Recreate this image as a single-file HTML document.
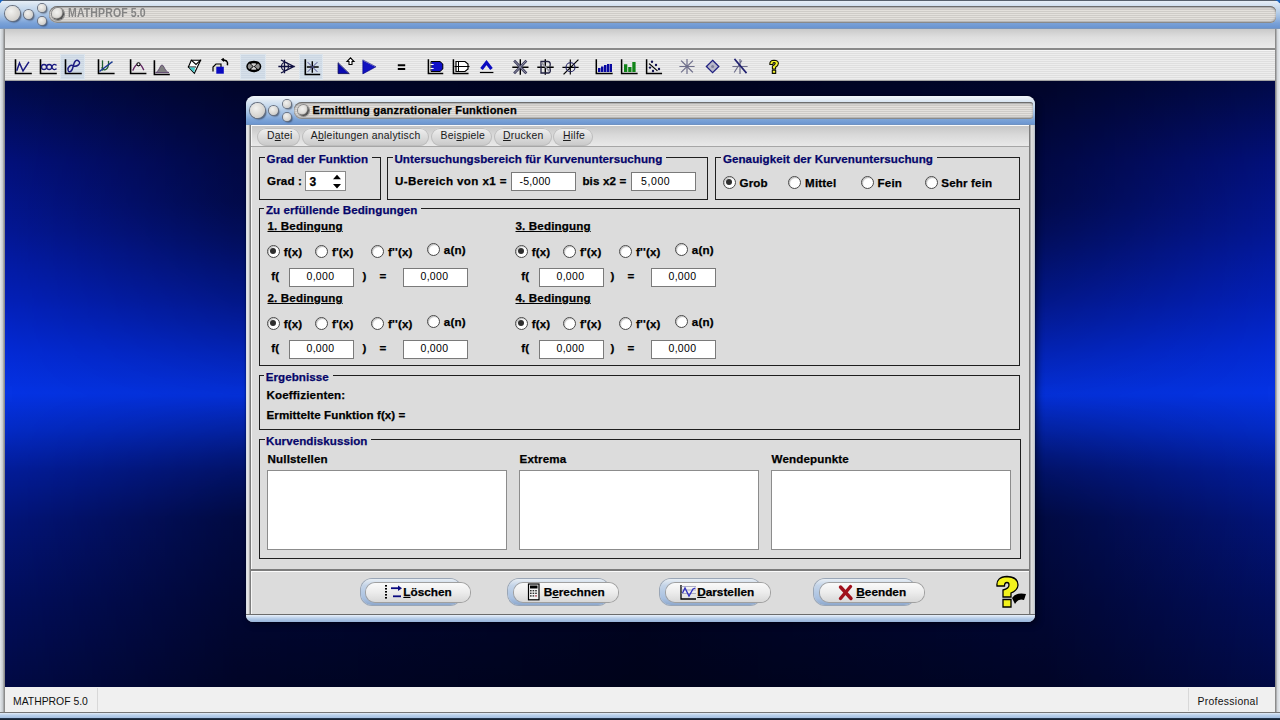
<!DOCTYPE html><html><head><meta charset="utf-8"><style>
*{margin:0;padding:0;box-sizing:border-box}
html,body{width:1280px;height:720px;overflow:hidden;background:#1a2438;font-family:"Liberation Sans",sans-serif}
.a{position:absolute}
.t{position:absolute;white-space:nowrap;line-height:1;font-family:"Liberation Sans",sans-serif}
.bub{position:absolute;border-radius:50%;background:radial-gradient(circle at 40% 35%,#f2f2f0 0,#dcdad6 50%,#c4c2be 100%);box-shadow:0 0 0 1px #6a7280,1.5px 1.5px 1.5px rgba(30,40,60,.6)}
.grp{position:absolute;border:1px solid #1e1e1e}
.inp{position:absolute;background:#fff;border:1px solid #7a7a7a}
.rad{position:absolute;width:13px;height:13px;border-radius:50%;background:#fff;border:1.3px solid #484848;box-shadow:inset 1px 1px 1px #c0c0c0}
.rad.on::after{content:"";position:absolute;left:2.3px;top:2.3px;width:6.2px;height:6.2px;border-radius:50%;background:#2e2e2e}
.pill{position:absolute;border-radius:9px;background:linear-gradient(#f0f0f0,#d8d8d8 60%,#c8c8c8);box-shadow:inset 0 0 0 1px #bdbdbd}
</style></head><body>
<div class="a" style="left:0px;top:0px;width:1280px;height:720px;background:linear-gradient(135deg,#1a64c0 0,#1a64c0 4px,rgba(0,0,0,0) 4px),linear-gradient(225deg,#1a64c0 0,#1a64c0 5px,#cfd8e2 5px)"></div>
<div class="a" style="left:0px;top:3px;width:1280px;height:717px;background:#cfd8e2"></div>
<div class="a" style="left:0px;top:0px;width:1280px;height:29px;border-radius:5px 6px 0 0;background:linear-gradient(#56606c 0,#56606c 1px,#e6eef6 1px,#d4e2f0 5px,#b8cfe8 12px,#94b5e0 19px,#7aa2d8 23px,#6a94d0 28px,#8a9aac 29px)"></div>
<div class="a" style="left:49px;top:5.5px;width:1227px;height:17.0px;border-radius:9px 6px 6px 9px;background:repeating-linear-gradient(#e4e1dd 0,#e4e1dd 1px,#cfccc8 1px,#cfccc8 2px);box-shadow:inset 0 1px 0 #6e6e6e,inset 0 2px 2px #a8a8a8,inset 0 -1px 0 #8a8a8a,inset 0 -2px 2px #b0b0b0"></div>
<div class="bub" style="left:5px;top:6px;width:15px;height:15px"></div>
<div class="bub" style="left:24px;top:9.5px;width:9px;height:9px"></div>
<div class="bub" style="left:38px;top:3.5px;width:8px;height:8px"></div>
<div class="bub" style="left:38px;top:16.5px;width:8px;height:8px"></div>
<div class="bub" style="left:52px;top:8px;width:11.5px;height:11.5px;box-shadow:0 0 0 1px #8a8a8a,inset -1.5px -1.5px 1px #505050"></div>
<div class="t" style="left:67.7px;top:7.44px;font-size:12px;font-weight:bold;color:#848484;-webkit-text-stroke:0.25px #848484;letter-spacing:0.15px;transform:scaleX(0.875);transform-origin:0 0;-webkit-text-stroke:0">MATHPROF 5.0</div>
<div class="a" style="left:0px;top:29px;width:1280px;height:20px;background:linear-gradient(#c9c9c9,#dedede 40%,#ececec)"></div>
<div class="a" style="left:0px;top:48px;width:1280px;height:2px;background:#8a8a8a"></div>
<div class="a" style="left:0px;top:50px;width:1280px;height:31px;background:repeating-linear-gradient(#ededed 0,#ededed 1px,#dfdfdf 1px,#dfdfdf 2px);box-shadow:inset 0 -1px 0 #a4a4a4,inset 0 1px 0 #f6f6f6"></div>
<div class="a" style="left:0px;top:29px;width:5px;height:683px;background:linear-gradient(90deg,#e4e8ec,#c4c8cc 3px,#8c8c8c 4px,#8c8c8c 5px)"></div>
<div class="a" style="left:1275px;top:29px;width:5px;height:683px;background:linear-gradient(90deg,#8c8c8c 0,#8c8c8c 1px,#d0d4d8 2px,#e8ecf0)"></div>
<div class="a" style="left:5px;top:81px;width:1270px;height:606px;background:linear-gradient(#020a48 0,#03107a 80px,#041794 150px,#0420b8 220px,#042ad4 270px,#0533e4 312px,#042ac4 350px,#031c98 390px,#031478 440px,#020e5c 520px,#020a44 606px)"></div>
<div class="a" style="left:5px;top:81px;width:1270px;height:606px;background:linear-gradient(90deg,rgba(0,0,8,0) 0,rgba(0,0,8,.48) 18%,rgba(0,0,8,.7) 50%,rgba(0,0,8,.48) 82%,rgba(0,0,8,0) 100%);-webkit-mask-image:linear-gradient(#000 0,#000 20%,rgba(0,0,0,.12) 52%,rgba(0,0,0,.6) 62%,#000 72%,#000 100%)"></div>
<div class="a" style="left:5px;top:687px;width:1270px;height:25px;background:#f0f0f0"></div>
<div class="a" style="left:97px;top:688px;width:1px;height:23px;background:#d8d8d8"></div>
<div class="a" style="left:1188px;top:688px;width:1px;height:23px;background:#d8d8d8"></div>
<div class="t" style="left:13px;top:696.90px;font-size:10.4px;color:#111;">MATHPROF 5.0</div>
<div class="t" style="left:1197.5px;top:696.70px;font-size:10.4px;color:#111;letter-spacing:0.3px">Professional</div>
<div class="a" style="left:0px;top:712px;width:1280px;height:8px;background:linear-gradient(#767676 0,#767676 1px,#e2ecf8 1px,#bcd2ec 3px,#a8c2e2 5.5px,#22344a 6.5px,#101a26 8px)"></div>
<div class="a" style="left:60px;top:54px;width:25px;height:26px;background:repeating-linear-gradient(#d6e0ea 0,#d6e0ea 1px,#cbd6e2 1px,#cbd6e2 2px);box-shadow:inset 0 0 0 1px #dde6ee"></div>
<div class="a" style="left:240px;top:54px;width:26px;height:26px;background:repeating-linear-gradient(#d6e0ea 0,#d6e0ea 1px,#cbd6e2 1px,#cbd6e2 2px);box-shadow:inset 0 0 0 1px #dde6ee"></div>
<div class="a" style="left:299px;top:54px;width:24px;height:26px;background:repeating-linear-gradient(#d6e0ea 0,#d6e0ea 1px,#cbd6e2 1px,#cbd6e2 2px);box-shadow:inset 0 0 0 1px #dde6ee"></div>
<svg class="a" style="left:0;top:0" width="800" height="82" viewBox="0 0 800 82">
<g fill="none" stroke-linecap="square">
<!-- 1 -->
<path d="M15.5 60V73.5H31" stroke="#000" stroke-width="1.6"/>
<path d="M17 70L19.5 63L23 71L28.5 62.5" stroke="#1a1a80" stroke-width="1.5"/>
<!-- 2 -->
<path d="M40.5 60V73.5H56" stroke="#000" stroke-width="1.6"/>
<circle cx="44" cy="67" r="2.5" stroke="#1a1a80" stroke-width="1.3"/>
<circle cx="49.2" cy="67" r="2.5" stroke="#1a1a80" stroke-width="1.3"/>
<path d="M56 65A2.5 2.5 0 1 0 56 69" stroke="#1a1a80" stroke-width="1.3"/>
<!-- 3 -->
<path d="M65.5 60V73.5H81" stroke="#000" stroke-width="1.6"/>
<path d="M73.3 66C71 64 67.5 67 68 70S72 72.5 73.3 66S77 59.5 79 61.5S77.5 67 73.3 66" stroke="#1a1a80" stroke-width="1.4"/>
<!-- 4 -->
<path d="M98.5 60V73.5H113.8" stroke="#000" stroke-width="1.6"/>
<path d="M102.5 61V70" stroke="#206030" stroke-width="1.3"/>
<path d="M102 68Q104 71 106.5 69T108.5 61.5" stroke="#206030" stroke-width="1.3"/>
<path d="M100 71L112 62" stroke="#1a3a90" stroke-width="1.3"/>
<!-- 5 -->
<path d="M130.6 60V73.5H145.6" stroke="#000" stroke-width="1.6"/>
<path d="M133 70Q138.5 58 143.5 69.5" stroke="#602060" stroke-width="1.4"/>
<circle cx="138.5" cy="64.3" r="1.6" fill="#fff" stroke="#000" stroke-width="1.1"/>
<!-- 6 -->
<path d="M154.4 61V74.5H169" stroke="#000" stroke-width="1.6"/>
<path d="M156 72.5C159 72 160 65 162 65S165 72 168.5 72.5Z" fill="#808080" stroke="#604a70" stroke-width="1"/>
<!-- 7 -->
<path d="M191.3 60.2H200.6L194.4 73.3L188.4 67Z" fill="#fff" stroke="#000" stroke-width="1.1"/>
<path d="M191.3 60.2L196 64.5L200.6 60.2M188.4 67H195.5" stroke="#000" stroke-width="1.1"/>
<path d="M189 67.5H195L194.3 72.5Z" fill="#40c8c8"/>
<!-- 8 -->
<path d="M213 71V67L216 64H221V67" fill="#e0e0d0" stroke="#000" stroke-width="1.2"/>
<rect x="216.3" y="66.7" width="7.5" height="7" fill="#0a0ac0"/>
<path d="M222.5 59.5L226.5 61Q228 62.5 227.5 64.5" stroke="#000" stroke-width="1.5"/>
<path d="M221 59.5L224 58V62Z" fill="#000"/>
<!-- 9 -->
<ellipse cx="253.8" cy="66.4" rx="6.8" ry="5" fill="#909090" stroke="#000" stroke-width="1.5"/>
<path d="M249.5 62.5L258 70.3M258 62.5L249.5 70.3" stroke="#000" stroke-width="1.4"/>
<path d="M250.5 62.3H257M250.5 70.5H257" stroke="#000" stroke-width="1.2"/>
<path d="M251 64L253.8 66.4L256.5 64Z M251 69L253.8 66.4L256.5 69Z" fill="#d0d0d0"/>
<!-- 10 -->
<path d="M279 66.5H294M284.5 60.5V72.5M281.5 60.3L294 66.5L281.5 72.7" stroke="#101040" stroke-width="1.3"/>
<ellipse cx="285" cy="66.5" rx="3.5" ry="4" stroke="#101040" stroke-width="1.2"/>
<!-- 11 -->
<path d="M305.3 60V74.5H319.4" stroke="#000" stroke-width="1.6"/>
<path d="M307.5 67H318M312.3 62V72" stroke="#000" stroke-width="1.4"/>
<path d="M308 62.5L317 71.5M317 62.5L308 71.5" stroke="#505090" stroke-width="1"/>
<!-- 12 -->
<path d="M338.1 63.2V73.6H348.8Z" fill="#0a0ab0" stroke="#000050" stroke-width=".8"/>
<path d="M349 64.5V61.5H347L350.5 57.8L354 61.5H352V64.5Z" fill="#fff" stroke="#000" stroke-width="1.1"/>
<!-- 13 -->
<path d="M362.8 60.4V73.9L375.6 67Z" fill="#1212c0" stroke="#000080" stroke-width=".6"/>
<!-- 14 -->
<path d="M397.8 64.2H405.2V66.2H397.8Z M397.8 68H405.2V70H397.8Z" fill="#000"/>
<!-- 15 -->
<path d="M428.4 60V73.5H442.5" stroke="#000" stroke-width="1.5"/>
<path d="M431.5 61.5H440L442.8 64V69L440 71.5H431.5Z" fill="#1010c8" stroke="#000" stroke-width="1"/>
<path d="M431 64.5H433M431 68.5H433" stroke="#fff" stroke-width="1.2"/>
<!-- 16 -->
<path d="M453.4 60V73.5H467.8" stroke="#000" stroke-width="1.5"/>
<path d="M456 61.5H465L468 64V69L465 71.5H456Z" fill="#fff" stroke="#000" stroke-width="1.2"/>
<path d="M455 66.5H469M458.5 61.5V71.5" stroke="#000" stroke-width="1"/>
<!-- 17 -->
<path d="M481.5 69L486.5 62.5L491.5 69" stroke="#0a0ac0" stroke-width="3.2" stroke-linecap="butt"/>
<path d="M480.5 72.5H492.8" stroke="#000" stroke-width="1.2"/>
<!-- 18 -->
<path d="M513 67.3H527.8M520.3 60V74" stroke="#000" stroke-width="1.4"/>
<path d="M515 61.5L525.5 72.5M525.5 61.5L515 72.5" stroke="#404060" stroke-width="2.6"/>
<path d="M515 61.5L525.5 72.5M525.5 61.5L515 72.5" stroke="#9090a0" stroke-width="1"/>
<!-- 19 -->
<path d="M538 67.3H553M545.3 60V74" stroke="#000" stroke-width="1.4"/>
<path d="M541 61.5H548Q551 62 550 66M541 73H549Q551 72 550 68.5M541 61.5V73" stroke="#202040" stroke-width="1.3"/>
<path d="M542 63L549 71" stroke="#9090a0" stroke-width="1.5"/>
<!-- 20 -->
<path d="M563 67.3H578M570.3 60V74M564 74L578 60" stroke="#000" stroke-width="1.2"/>
<circle cx="570.5" cy="67.3" r="4.5" stroke="#202060" stroke-width="1.1"/>
<!-- 21 -->
<path d="M596.3 60V73.5H611.9" stroke="#000" stroke-width="1.5"/>
<path d="M598 68H600.5V72H598Z M601 66.5H603.5V72H601Z M604 65H606.5V72H604Z M607 64H609.5V72H607Z M610 64H612V72H610Z" fill="#0808a0"/>
<!-- 22 -->
<path d="M621.6 60V73.5H636.9" stroke="#000" stroke-width="1.5"/>
<path d="M624 64.2H627.3V72H624Z M628.2 67H631.5V72H628.2Z M632.3 62H635.6V72H632.3Z" fill="#108418"/>
<!-- 23 -->
<path d="M646.6 60V73.5H661.3" stroke="#000" stroke-width="1.5"/>
<path d="M649.5 64L657 70.5" stroke="#000" stroke-width="1.2"/>
<g fill="#101050"><circle cx="652" cy="61.7" r="1.2"/><circle cx="650" cy="67.6" r="1.2"/><circle cx="656" cy="65" r="1.2"/><circle cx="653" cy="71" r="1.2"/><circle cx="659" cy="69" r="1.2"/></g>
<!-- 24 -->
<path d="M680 66.5H694M687 59.5V73.5M681.5 61L692.5 72M692.5 61L681.5 72" stroke="#70708c" stroke-width="1.2"/>
<!-- 25 -->
<path d="M712.6 60.3L718.8 66.5L712.6 72.7L706.4 66.5Z" fill="#b8b8c8" stroke="#202080" stroke-width="1.3"/>
<circle cx="712.6" cy="66.5" r="1.5" fill="#8080a0"/>
<!-- 26 -->
<path d="M733 66.5H747M740 59.5V73.5M741.5 61L734.5 72" stroke="#70708c" stroke-width="1.2"/>
<path d="M735 59.5L746 72.5" stroke="#202070" stroke-width="1.6"/>
</g>
<path d="M769.8 64.5Q769.5 60.2 774 60.2Q778.5 60.3 778.4 63.6Q778.3 65.8 775.6 67.2V69H772.4V66Q775.2 64.8 775.2 63.5Q775.2 62.6 774 62.6Q772.9 62.6 772.9 64.5Z M772.3 70.3H775.7V73.4H772.3Z" fill="#f2f22a" stroke="#101000" stroke-width="1.1" stroke-linejoin="round"/>
</svg>
<div class="a" style="left:246px;top:96px;width:789px;height:526px;border-radius:9px 9px 7px 7px;background:#d4dae2;box-shadow:0 0 2px rgba(0,0,0,.6),3px 3px 6px rgba(0,0,10,.45)"></div>
<div class="a" style="left:246px;top:96px;width:789px;height:30px;border-radius:8px 8px 0 0;background:linear-gradient(#f2f6fa 0,#dce7f2 5px,#bcd2ea 12px,#98b8e0 19px,#7ea5d8 23px,#6c96d0 28px,#7a8a9c 30px)"></div>
<div class="a" style="left:294px;top:102px;width:739px;height:16.5px;border-radius:8px 3px 3px 8px;background:repeating-linear-gradient(#e4e1dd 0,#e4e1dd 1px,#cfccc8 1px,#cfccc8 2px);box-shadow:inset 0 1px 0 #6e6e6e,inset 0 2px 2px #a8a8a8,inset 0 -1px 0 #8a8a8a,inset 0 -2px 2px #b0b0b0"></div>
<div class="bub" style="left:250px;top:102.5px;width:15px;height:15px"></div>
<div class="bub" style="left:269px;top:105.5px;width:9px;height:9px"></div>
<div class="bub" style="left:283px;top:100px;width:8px;height:8px"></div>
<div class="bub" style="left:283px;top:113px;width:8px;height:8px"></div>
<div class="bub" style="left:297.5px;top:104.5px;width:11px;height:11px;box-shadow:0 0 0 1px #8a8a8a,inset -1.5px -1.5px 1px #505050"></div>
<div class="t" style="left:312.5px;top:105.00px;font-size:11.1px;font-weight:bold;color:#000;-webkit-text-stroke:0.25px #000;letter-spacing:0.2px;">Ermittlung ganzrationaler Funktionen</div>
<div class="a" style="left:246px;top:125px;width:5px;height:489px;background:linear-gradient(90deg,#c8d4e2,#e8e8e8 1px,#d8d8d8 3px,#7c7c7c 4px,#7c7c7c 5px)"></div>
<div class="a" style="left:1029px;top:125px;width:6px;height:489px;background:linear-gradient(90deg,#7c7c7c 0,#7c7c7c 1px,#e0e0e0 2px,#d0d0d0 5px,#a8b8cc 6px)"></div>
<div class="a" style="left:251px;top:125px;width:778px;height:489px;background:#dcdcdc"></div>
<div class="a" style="left:251px;top:126px;width:778px;height:20px;background:linear-gradient(#c6c6c6,#d9d9d9 45%,#e9e9e9)"></div>
<div class="a" style="left:251px;top:125px;width:778px;height:1px;background:#fafafa"></div>
<div class="a" style="left:251px;top:126px;width:1px;height:488px;background:#f6f6f6"></div>
<div class="a" style="left:251px;top:146px;width:778px;height:1px;background:#a6a6a6"></div>
<div class="pill" style="left:256.7px;top:128px;width:43.8px;height:17.5px"></div>
<div class="t" style="left:267px;top:131.00px;font-size:10.4px;color:#1a1a1a;letter-spacing:0.26px">D<u>a</u>tei</div>
<div class="pill" style="left:302px;top:128px;width:126.8px;height:17.5px"></div>
<div class="t" style="left:310.8px;top:131.00px;font-size:10.4px;color:#1a1a1a;letter-spacing:0.26px">A<u>b</u>leitungen analytisch</div>
<div class="pill" style="left:431px;top:128px;width:60.8px;height:17.5px"></div>
<div class="t" style="left:440.6px;top:131.00px;font-size:10.4px;color:#1a1a1a;letter-spacing:0.26px">Bei<u>s</u>piele</div>
<div class="pill" style="left:494px;top:128px;width:57.9px;height:17.5px"></div>
<div class="t" style="left:503px;top:131.00px;font-size:10.4px;color:#1a1a1a;letter-spacing:0.26px"><u>D</u>rucken</div>
<div class="pill" style="left:553.4px;top:128px;width:40.1px;height:17.5px"></div>
<div class="t" style="left:563px;top:131.00px;font-size:10.4px;color:#1a1a1a;letter-spacing:0.26px"><u>H</u>ilfe</div>
<div class="a" style="left:251px;top:569px;width:778px;height:2px;background:#7c7c7c"></div>
<div class="a" style="left:251px;top:571px;width:778px;height:1px;background:#fbfbfb"></div>
<div class="a" style="left:246px;top:614px;width:789px;height:8px;border-radius:0 0 7px 7px;background:linear-gradient(#6c6c6c 0,#6c6c6c 1px,#e8f0fa 1px,#b0c8e6 5px,#98b4da 8px)"></div>
<div class="grp" style="left:259px;top:157px;width:122px;height:43px"></div>
<div class="t" style="left:265.1px;top:152.68px;font-size:11.6px;font-weight:bold;color:#06066a;-webkit-text-stroke:0.25px #06066a;letter-spacing:0.06px;background:#dcdcdc;padding:0 4px 0 1.5px">Grad der Funktion</div>
<div class="grp" style="left:387px;top:157px;width:321px;height:43px"></div>
<div class="t" style="left:392.9px;top:152.68px;font-size:11.6px;font-weight:bold;color:#06066a;-webkit-text-stroke:0.25px #06066a;letter-spacing:0.06px;background:#dcdcdc;padding:0 4px 0 1.5px">Untersuchungsbereich für Kurvenuntersuchung</div>
<div class="grp" style="left:715px;top:157px;width:305px;height:43px"></div>
<div class="t" style="left:721.4px;top:152.68px;font-size:11.6px;font-weight:bold;color:#06066a;-webkit-text-stroke:0.25px #06066a;letter-spacing:0.06px;background:#dcdcdc;padding:0 4px 0 1.5px">Genauigkeit der Kurvenuntersuchung</div>
<div class="grp" style="left:259px;top:208px;width:761px;height:158px"></div>
<div class="t" style="left:264.4px;top:203.68px;font-size:11.6px;font-weight:bold;color:#06066a;-webkit-text-stroke:0.25px #06066a;letter-spacing:0.06px;background:#dcdcdc;padding:0 4px 0 1.5px">Zu erfüllende Bedingungen</div>
<div class="grp" style="left:259px;top:375px;width:761px;height:55px"></div>
<div class="t" style="left:264.2px;top:370.98px;font-size:11.6px;font-weight:bold;color:#06066a;-webkit-text-stroke:0.25px #06066a;letter-spacing:0.06px;background:#dcdcdc;padding:0 4px 0 1.5px">Ergebnisse</div>
<div class="grp" style="left:259px;top:439px;width:762px;height:120px"></div>
<div class="t" style="left:264.5px;top:434.88px;font-size:11.6px;font-weight:bold;color:#06066a;-webkit-text-stroke:0.25px #06066a;letter-spacing:0.06px;background:#dcdcdc;padding:0 4px 0 1.5px">Kurvendiskussion</div>
<div class="t" style="left:267px;top:175.18px;font-size:11.6px;font-weight:bold;color:#000;-webkit-text-stroke:0.25px #000;letter-spacing:0.15px;">Grad :</div>
<div class="inp" style="left:305px;top:171px;width:41px;height:20px;border-color:#8a8a8a"></div>
<div class="t" style="left:309.5px;top:175.64px;font-size:12px;font-weight:bold;color:#000;-webkit-text-stroke:0.25px #000;letter-spacing:0.15px;">3</div>
<svg class="a" style="left:330px;top:172px" width="14" height="18"><path d="M3 7.2 L7 2.8 L11 7.2Z M3 12 L7 16.4 L11 12Z" fill="#000"/></svg>
<div class="t" style="left:395px;top:174.78px;font-size:11.6px;font-weight:bold;color:#000;-webkit-text-stroke:0.25px #000;letter-spacing:0.4px;">U-Bereich von x1 =</div>
<div class="inp" style="left:511px;top:172px;width:65px;height:19px"></div>
<div class="t" style="left:519.5px;top:176.41px;font-size:10.5px;color:#000;letter-spacing:0.2px">-5,000</div>
<div class="t" style="left:582.4px;top:174.78px;font-size:11.6px;font-weight:bold;color:#000;-webkit-text-stroke:0.25px #000;letter-spacing:0.15px;">bis x2 =</div>
<div class="inp" style="left:631px;top:172px;width:65px;height:19px"></div>
<div class="t" style="left:641px;top:176.41px;font-size:10.5px;color:#000;letter-spacing:0.6px">5,000</div>
<div class="rad on" style="left:722.7px;top:176px"></div>
<div class="t" style="left:739.5px;top:177.18px;font-size:11.6px;font-weight:bold;color:#000;-webkit-text-stroke:0.25px #000;letter-spacing:0.15px;">Grob</div>
<div class="rad" style="left:788.3px;top:176px"></div>
<div class="t" style="left:805.0999999999999px;top:177.18px;font-size:11.6px;font-weight:bold;color:#000;-webkit-text-stroke:0.25px #000;letter-spacing:0.15px;">Mittel</div>
<div class="rad" style="left:860.8px;top:176px"></div>
<div class="t" style="left:877.5999999999999px;top:177.18px;font-size:11.6px;font-weight:bold;color:#000;-webkit-text-stroke:0.25px #000;letter-spacing:0.15px;">Fein</div>
<div class="rad" style="left:924.5px;top:176px"></div>
<div class="t" style="left:941.3px;top:177.18px;font-size:11.6px;font-weight:bold;color:#000;-webkit-text-stroke:0.25px #000;letter-spacing:0.15px;">Sehr fein</div>
<div class="t" style="left:267.5px;top:220.18px;font-size:11.6px;font-weight:bold;color:#000;-webkit-text-stroke:0.25px #000;letter-spacing:0.15px;text-decoration:underline;text-underline-offset:1px">1. Bedingung</div>
<div class="rad on" style="left:266.5px;top:244.9px"></div>
<div class="t" style="left:283.7px;top:246.18px;font-size:11.6px;font-weight:bold;color:#000;-webkit-text-stroke:0.25px #000;letter-spacing:0.15px;">f(x)</div>
<div class="rad" style="left:314.8px;top:244.9px"></div>
<div class="t" style="left:331.95px;top:246.18px;font-size:11.6px;font-weight:bold;color:#000;-webkit-text-stroke:0.25px #000;letter-spacing:0.15px;">f'(x)</div>
<div class="rad" style="left:370.9px;top:244.9px"></div>
<div class="t" style="left:388.09999999999997px;top:246.18px;font-size:11.6px;font-weight:bold;color:#000;-webkit-text-stroke:0.25px #000;letter-spacing:0.15px;">f''(x)</div>
<div class="rad" style="left:426.6px;top:243.0px"></div>
<div class="t" style="left:443.8px;top:244.28px;font-size:11.6px;font-weight:bold;color:#000;-webkit-text-stroke:0.25px #000;letter-spacing:0.15px;">a(n)</div>
<div class="t" style="left:271.25px;top:269.58px;font-size:11.6px;font-weight:bold;color:#000;-webkit-text-stroke:0.25px #000;letter-spacing:0.15px;">f(</div>
<div class="inp" style="left:289.4px;top:267.5px;width:65px;height:19px"></div>
<div class="t" style="left:306.5px;top:270.81px;font-size:10.5px;color:#000;letter-spacing:0.3px">0,000</div>
<div class="t" style="left:362.6px;top:269.58px;font-size:11.6px;font-weight:bold;color:#000;-webkit-text-stroke:0.25px #000;letter-spacing:0.15px;">)</div>
<div class="t" style="left:379.4px;top:269.58px;font-size:11.6px;font-weight:bold;color:#000;-webkit-text-stroke:0.25px #000;letter-spacing:0.15px;">=</div>
<div class="inp" style="left:403.2px;top:267.5px;width:65px;height:19px"></div>
<div class="t" style="left:420.5px;top:270.81px;font-size:10.5px;color:#000;letter-spacing:0.3px">0,000</div>
<div class="t" style="left:267.5px;top:292.18px;font-size:11.6px;font-weight:bold;color:#000;-webkit-text-stroke:0.25px #000;letter-spacing:0.15px;text-decoration:underline;text-underline-offset:1px">2. Bedingung</div>
<div class="rad on" style="left:266.5px;top:316.9px"></div>
<div class="t" style="left:283.7px;top:318.18px;font-size:11.6px;font-weight:bold;color:#000;-webkit-text-stroke:0.25px #000;letter-spacing:0.15px;">f(x)</div>
<div class="rad" style="left:314.8px;top:316.9px"></div>
<div class="t" style="left:331.95px;top:318.18px;font-size:11.6px;font-weight:bold;color:#000;-webkit-text-stroke:0.25px #000;letter-spacing:0.15px;">f'(x)</div>
<div class="rad" style="left:370.9px;top:316.9px"></div>
<div class="t" style="left:388.09999999999997px;top:318.18px;font-size:11.6px;font-weight:bold;color:#000;-webkit-text-stroke:0.25px #000;letter-spacing:0.15px;">f''(x)</div>
<div class="rad" style="left:426.6px;top:315.0px"></div>
<div class="t" style="left:443.8px;top:316.28px;font-size:11.6px;font-weight:bold;color:#000;-webkit-text-stroke:0.25px #000;letter-spacing:0.15px;">a(n)</div>
<div class="t" style="left:271.25px;top:341.58px;font-size:11.6px;font-weight:bold;color:#000;-webkit-text-stroke:0.25px #000;letter-spacing:0.15px;">f(</div>
<div class="inp" style="left:289.4px;top:339.5px;width:65px;height:19px"></div>
<div class="t" style="left:306.5px;top:342.81px;font-size:10.5px;color:#000;letter-spacing:0.3px">0,000</div>
<div class="t" style="left:362.6px;top:341.58px;font-size:11.6px;font-weight:bold;color:#000;-webkit-text-stroke:0.25px #000;letter-spacing:0.15px;">)</div>
<div class="t" style="left:379.4px;top:341.58px;font-size:11.6px;font-weight:bold;color:#000;-webkit-text-stroke:0.25px #000;letter-spacing:0.15px;">=</div>
<div class="inp" style="left:403.2px;top:339.5px;width:65px;height:19px"></div>
<div class="t" style="left:420.5px;top:342.81px;font-size:10.5px;color:#000;letter-spacing:0.3px">0,000</div>
<div class="t" style="left:515.5px;top:220.18px;font-size:11.6px;font-weight:bold;color:#000;-webkit-text-stroke:0.25px #000;letter-spacing:0.15px;text-decoration:underline;text-underline-offset:1px">3. Bedingung</div>
<div class="rad on" style="left:514.5px;top:244.9px"></div>
<div class="t" style="left:531.7px;top:246.18px;font-size:11.6px;font-weight:bold;color:#000;-webkit-text-stroke:0.25px #000;letter-spacing:0.15px;">f(x)</div>
<div class="rad" style="left:562.8px;top:244.9px"></div>
<div class="t" style="left:579.95px;top:246.18px;font-size:11.6px;font-weight:bold;color:#000;-webkit-text-stroke:0.25px #000;letter-spacing:0.15px;">f'(x)</div>
<div class="rad" style="left:618.9px;top:244.9px"></div>
<div class="t" style="left:636.0999999999999px;top:246.18px;font-size:11.6px;font-weight:bold;color:#000;-webkit-text-stroke:0.25px #000;letter-spacing:0.15px;">f''(x)</div>
<div class="rad" style="left:674.6px;top:243.0px"></div>
<div class="t" style="left:691.8px;top:244.28px;font-size:11.6px;font-weight:bold;color:#000;-webkit-text-stroke:0.25px #000;letter-spacing:0.15px;">a(n)</div>
<div class="t" style="left:521.25px;top:269.58px;font-size:11.6px;font-weight:bold;color:#000;-webkit-text-stroke:0.25px #000;letter-spacing:0.15px;">f(</div>
<div class="inp" style="left:539.4px;top:267.5px;width:65px;height:19px"></div>
<div class="t" style="left:556.5px;top:270.81px;font-size:10.5px;color:#000;letter-spacing:0.3px">0,000</div>
<div class="t" style="left:610.6px;top:269.58px;font-size:11.6px;font-weight:bold;color:#000;-webkit-text-stroke:0.25px #000;letter-spacing:0.15px;">)</div>
<div class="t" style="left:627.4px;top:269.58px;font-size:11.6px;font-weight:bold;color:#000;-webkit-text-stroke:0.25px #000;letter-spacing:0.15px;">=</div>
<div class="inp" style="left:651.2px;top:267.5px;width:65px;height:19px"></div>
<div class="t" style="left:668.5px;top:270.81px;font-size:10.5px;color:#000;letter-spacing:0.3px">0,000</div>
<div class="t" style="left:515.5px;top:292.18px;font-size:11.6px;font-weight:bold;color:#000;-webkit-text-stroke:0.25px #000;letter-spacing:0.15px;text-decoration:underline;text-underline-offset:1px">4. Bedingung</div>
<div class="rad on" style="left:514.5px;top:316.9px"></div>
<div class="t" style="left:531.7px;top:318.18px;font-size:11.6px;font-weight:bold;color:#000;-webkit-text-stroke:0.25px #000;letter-spacing:0.15px;">f(x)</div>
<div class="rad" style="left:562.8px;top:316.9px"></div>
<div class="t" style="left:579.95px;top:318.18px;font-size:11.6px;font-weight:bold;color:#000;-webkit-text-stroke:0.25px #000;letter-spacing:0.15px;">f'(x)</div>
<div class="rad" style="left:618.9px;top:316.9px"></div>
<div class="t" style="left:636.0999999999999px;top:318.18px;font-size:11.6px;font-weight:bold;color:#000;-webkit-text-stroke:0.25px #000;letter-spacing:0.15px;">f''(x)</div>
<div class="rad" style="left:674.6px;top:315.0px"></div>
<div class="t" style="left:691.8px;top:316.28px;font-size:11.6px;font-weight:bold;color:#000;-webkit-text-stroke:0.25px #000;letter-spacing:0.15px;">a(n)</div>
<div class="t" style="left:521.25px;top:341.58px;font-size:11.6px;font-weight:bold;color:#000;-webkit-text-stroke:0.25px #000;letter-spacing:0.15px;">f(</div>
<div class="inp" style="left:539.4px;top:339.5px;width:65px;height:19px"></div>
<div class="t" style="left:556.5px;top:342.81px;font-size:10.5px;color:#000;letter-spacing:0.3px">0,000</div>
<div class="t" style="left:610.6px;top:341.58px;font-size:11.6px;font-weight:bold;color:#000;-webkit-text-stroke:0.25px #000;letter-spacing:0.15px;">)</div>
<div class="t" style="left:627.4px;top:341.58px;font-size:11.6px;font-weight:bold;color:#000;-webkit-text-stroke:0.25px #000;letter-spacing:0.15px;">=</div>
<div class="inp" style="left:651.2px;top:339.5px;width:65px;height:19px"></div>
<div class="t" style="left:668.5px;top:342.81px;font-size:10.5px;color:#000;letter-spacing:0.3px">0,000</div>
<div class="t" style="left:266.5px;top:388.88px;font-size:11.6px;font-weight:bold;color:#000;-webkit-text-stroke:0.25px #000;letter-spacing:0.15px;">Koeffizienten:</div>
<div class="t" style="left:266.5px;top:408.88px;font-size:11.6px;font-weight:bold;color:#000;-webkit-text-stroke:0.25px #000;letter-spacing:0.08px;">Ermittelte Funktion f(x) =</div>
<div class="t" style="left:267.5px;top:452.68px;font-size:11.6px;font-weight:bold;color:#000;-webkit-text-stroke:0.25px #000;letter-spacing:0.15px;">Nullstellen</div>
<div class="inp" style="left:267px;top:470px;width:240px;height:80px;border-color:#8c8c8c"></div>
<div class="t" style="left:519.5px;top:452.68px;font-size:11.6px;font-weight:bold;color:#000;-webkit-text-stroke:0.25px #000;letter-spacing:0.15px;">Extrema</div>
<div class="inp" style="left:519px;top:470px;width:240px;height:80px;border-color:#8c8c8c"></div>
<div class="t" style="left:771.5px;top:452.68px;font-size:11.6px;font-weight:bold;color:#000;-webkit-text-stroke:0.25px #000;letter-spacing:0.15px;">Wendepunkte</div>
<div class="inp" style="left:771px;top:470px;width:240px;height:80px;border-color:#8c8c8c"></div>
<div class="a" style="left:360.5px;top:579px;width:100.5px;height:26px;border-radius:11px;background:linear-gradient(#e8eef4,#c4d4e8 25%,#a8c0e0 75%,#8ea8cc);box-shadow:0 0 0 1px #9aa6b6"></div>
<div class="a" style="left:366px;top:582.5px;width:104px;height:19.0px;border-radius:9px;background:linear-gradient(#fafafa,#ececec 50%,#d8d8d8);box-shadow:0 0 0 1px #a0a0a0"></div>
<div class="t" style="left:403.3px;top:586.91px;font-size:11.8px;font-weight:bold;color:#000;-webkit-text-stroke:0.25px #000;letter-spacing:0px;"><u>L</u>öschen</div>
<div class="a" style="left:508.0px;top:579px;width:100.5px;height:26px;border-radius:11px;background:linear-gradient(#e8eef4,#c4d4e8 25%,#a8c0e0 75%,#8ea8cc);box-shadow:0 0 0 1px #9aa6b6"></div>
<div class="a" style="left:513.5px;top:582.5px;width:104.0px;height:19.0px;border-radius:9px;background:linear-gradient(#fafafa,#ececec 50%,#d8d8d8);box-shadow:0 0 0 1px #a0a0a0"></div>
<div class="t" style="left:543.7px;top:586.91px;font-size:11.8px;font-weight:bold;color:#000;-webkit-text-stroke:0.25px #000;letter-spacing:0px;">B<u>e</u>rechnen</div>
<div class="a" style="left:660.0px;top:579px;width:100.5px;height:26px;border-radius:11px;background:linear-gradient(#e8eef4,#c4d4e8 25%,#a8c0e0 75%,#8ea8cc);box-shadow:0 0 0 1px #9aa6b6"></div>
<div class="a" style="left:665.5px;top:582.5px;width:104.0px;height:19.0px;border-radius:9px;background:linear-gradient(#fafafa,#ececec 50%,#d8d8d8);box-shadow:0 0 0 1px #a0a0a0"></div>
<div class="t" style="left:697.2px;top:586.91px;font-size:11.8px;font-weight:bold;color:#000;-webkit-text-stroke:0.25px #000;letter-spacing:0px;"><u>D</u>arstellen</div>
<div class="a" style="left:814.0px;top:579px;width:100.5px;height:26px;border-radius:11px;background:linear-gradient(#e8eef4,#c4d4e8 25%,#a8c0e0 75%,#8ea8cc);box-shadow:0 0 0 1px #9aa6b6"></div>
<div class="a" style="left:819.5px;top:582.5px;width:104.0px;height:19.0px;border-radius:9px;background:linear-gradient(#fafafa,#ececec 50%,#d8d8d8);box-shadow:0 0 0 1px #a0a0a0"></div>
<div class="t" style="left:856.3px;top:586.91px;font-size:11.8px;font-weight:bold;color:#000;-webkit-text-stroke:0.25px #000;letter-spacing:0px;"><u>B</u>eenden</div>
<svg class="a" style="left:0;top:560px" width="1280" height="60" viewBox="0 560 1280 60">
<g fill="#000"><rect x="385" y="585" width="2" height="1.6"/><rect x="385" y="588" width="2" height="1.6"/><rect x="385" y="591" width="2" height="1.6"/><rect x="385" y="594" width="2" height="1.6"/><rect x="385" y="597" width="2" height="1.6"/></g>
<path d="M391 588.2H399" stroke="#0a0a80" stroke-width="1.8"/><path d="M398 585.5L402 588.2L398 591Z" fill="#0a0a80"/>
<path d="M393 596.3H401" stroke="#0a0a80" stroke-width="1.8"/>
<rect x="528.5" y="584" width="10.5" height="15.8" fill="#f4f4f4" stroke="#000" stroke-width="1.2"/>
<rect x="530" y="585.5" width="7.5" height="3" fill="#000"/>
<g fill="#303030"><rect x="530" y="590" width="1.6" height="1.4"/><rect x="532.6" y="590" width="1.6" height="1.4"/><rect x="535.2" y="590" width="1.6" height="1.4"/>
<rect x="530" y="592.6" width="1.6" height="1.4"/><rect x="532.6" y="592.6" width="1.6" height="1.4"/><rect x="535.2" y="592.6" width="1.6" height="1.4"/>
<rect x="530" y="595.2" width="1.6" height="1.4"/><rect x="532.6" y="595.2" width="1.6" height="1.4"/><rect x="535.2" y="595.2" width="1.6" height="1.4" fill="#a03040"/></g>
<path d="M681 585V599H696" stroke="#000" stroke-width="1.3" fill="none"/>
<path d="M681 586.5H696M681 590H696M681 593.5H696" stroke="#8080a0" stroke-width=".6"/>
<path d="M682.5 593L685 588L689 596L693 589L695.5 588" stroke="#3030c0" stroke-width="1.3" fill="none"/>
<path d="M840.5 587L851 598.5M850.5 586.5L840.5 598.5" stroke="#a0101c" stroke-width="3.4" stroke-linecap="round"/>
<path d="M1012 598Q1016 592 1026 594L1024 600Q1018 598 1015 604Z" fill="#000"/>
<path d="M997 586Q996 577 1007 576.5Q1018 577 1018 585Q1018 590 1011 593V597H1003V590Q1009 588.5 1009 585Q1009 582.5 1007 582.5Q1004.5 582.5 1004.5 586Z M1003 599.5H1011V607H1003Z" fill="#f2f21c" stroke="#000" stroke-width="1.3"/>
</svg>
</body></html>
